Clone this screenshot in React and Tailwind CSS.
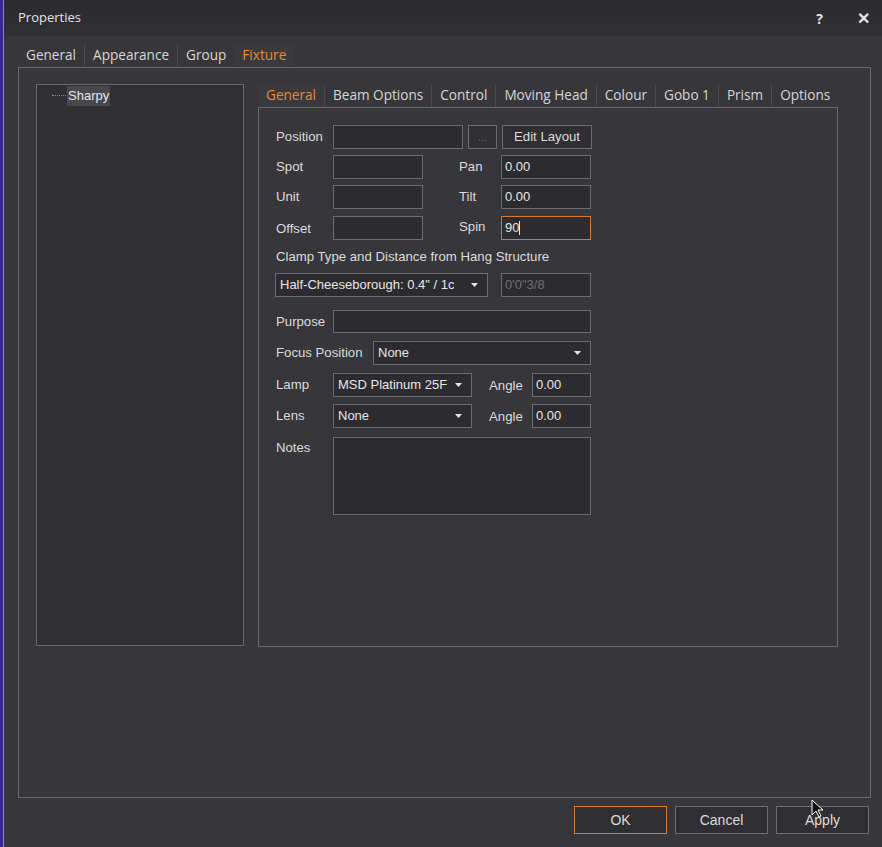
import React from 'react';

// Fixture properties dialog, dark theme
const sans = { fontFamily: '"Open Sans", "Noto Sans", sans-serif' };
const ui = { fontFamily: '"Liberation Sans", Arial, sans-serif' };

function Tab({ label, active, last }) {
  return (
    <div
      className={`h-full flex items-center px-[8px] ${last ? '' : 'border-r border-[#4a494e]'} ${
        active ? 'text-[#e8892f] bg-[#3a393e]' : 'text-[#d6d6d6]'
      }`}
    >
      {label}
    </div>
  );
}

function Input({ w, value, focus, disabled, h = 24, children }) {
  return (
    <div
      className={`flex items-center px-[3px] text-[13px] bg-[#2c2b2f] border ${
        focus ? 'border-[#d8782a]' : 'border-[#6c6c70]'
      } ${disabled ? 'text-[#6f6f73]' : 'text-[#e6e6e6]'}`}
      style={{ width: w, height: h }}
    >
      {value}
      {children}
    </div>
  );
}

function Select({ w, value }) {
  return (
    <div
      className="flex items-center justify-between pl-[4px] pr-[9px] h-[24px] text-[13px] text-[#e6e6e6] bg-[#2c2b2f] border border-[#6c6c70]"
      style={{ width: w }}
    >
      <span className="whitespace-nowrap overflow-hidden">{value}</span>
      <svg width="7" height="4" viewBox="0 0 7 4" className="shrink-0 ml-[4px]">
        <path d="M0 0h7L3.5 4z" fill="#e6e6e6" />
      </svg>
    </div>
  );
}

function Label({ w, children, className = '' }) {
  return (
    <div className={`text-[13.2px] text-[#dcdcdc] shrink-0 ${className}`} style={{ width: w }}>
      {children}
    </div>
  );
}

function Button({ children, primary, w = 93, h = 28 }) {
  return (
    <div
      className={`flex items-center justify-center text-[14px] text-[#dcdcdc] bg-[#2f2e32] border ${
        primary ? 'border-[#d8782a]' : 'border-[#6c6c70]'
      }`}
      style={{ width: w, height: h }}
    >
      {children}
    </div>
  );
}

export default function App() {
  const outerTabs = ['General', 'Appearance', 'Group', 'Fixture'];
  const innerTabs = ['General', 'Beam Options', 'Control', 'Moving Head', 'Colour', 'Gobo 1', 'Prism', 'Options'];

  return (
    <div className="w-[882px] h-[847px] flex bg-[#37363a] overflow-hidden relative" style={sans}>
      {/* app edge behind the dialog */}
      <div className="w-[4px] shrink-0 bg-[#3a2596] border-r border-[#d9782c]" />

      <div className="flex-1 flex flex-col">
        {/* title bar */}
        <div className="h-[36px] shrink-0 flex items-center pl-[14px] pr-[12px] bg-gradient-to-b from-[#2b2a2e] to-[#302f33] text-[13px] text-[#e4e4e4]">
          <span>Properties</span>
          <div className="ml-auto flex items-center gap-[34px] font-bold text-[14px]">
            <span>?</span>
            <span className="text-[16px]">✕</span>
          </div>
        </div>

        {/* outer tabs */}
        <div className="mt-[8px] ml-[14px] h-[23px] flex text-[13.6px]">
          {outerTabs.map((t, i) => (
            <Tab key={t} label={t} active={t === 'Fixture'} last={i >= outerTabs.length - 2} />
          ))}
        </div>

        {/* outer panel */}
        <div className="ml-[14px] w-[853px] h-[731px] border border-[#6a6a6e] flex pl-[17px] pt-[16px]">
          {/* tree */}
          <div className="w-[208px] h-[562px] border border-[#6a6a6e] bg-[#302f33] pt-[1px] pl-[15px]">
            <div className="flex items-center">
              <div className="w-[14px] border-t border-dotted border-[#8a8a8a] mr-[1px]" />
              <span className="px-[1px] bg-[#48474c] text-[13px] text-[#e6e6e6]" style={ui}>
                Sharpy
              </span>
            </div>
          </div>

          {/* fixture pages */}
          <div className="ml-[14px] flex flex-col">
            <div className="h-[23px] flex text-[13.6px]">
              {innerTabs.map((t, i) => (
                <Tab key={t} label={t} active={t === 'General'} last={i === innerTabs.length - 1} />
              ))}
            </div>
            <div className="w-[580px] h-[540px] border border-[#6a6a6e] pl-[17px] pt-[17px]" style={ui}>
              {/* Position */}
              <div className="flex items-center">
                <Label w={57}>Position</Label>
                <Input w={130} />
                <div className="ml-[5px] w-[29px] h-[24px] border border-[#6c6c70] bg-[#302f33] flex items-center justify-center text-[#6f6f73] text-[11px]">
                  ...
                </div>
                <div className="ml-[5px]">
                  <Button w={90} h={24}>
                    <span className="text-[13.2px]">Edit Layout</span>
                  </Button>
                </div>
              </div>

              {/* Spot / Pan */}
              <div className="flex items-center mt-[6px]">
                <Label w={57}>Spot</Label>
                <Input w={90} />
                <Label w={42} className="ml-[36px]">Pan</Label>
                <Input w={90} value="0.00" />
              </div>
              <div className="flex items-center mt-[6px]">
                <Label w={57}>Unit</Label>
                <Input w={90} />
                <Label w={42} className="ml-[36px]">Tilt</Label>
                <Input w={90} value="0.00" />
              </div>
              <div className="flex items-center mt-[7px]">
                <Label w={57} className="mt-[2px]">Offset</Label>
                <Input w={90} />
                <Label w={42} className="ml-[36px] -mt-[2px]">Spin</Label>
                <Input w={90} value="90" focus>
                  <span className="w-px h-[14px] bg-[#e6e6e6]" />
                </Input>
              </div>

              {/* Clamp */}
              <div className="mt-[7px] h-[20px] leading-[20px] text-[13.2px] text-[#dcdcdc]">
                Clamp Type and Distance from Hang Structure
              </div>
              <div className="flex items-center mt-[6px] -ml-[1px]">
                <Select w={213} value={'Half-Cheeseborough: 0.4" / 1c'} />
                <div className="ml-[13px]">
                  <Input w={90} value={'0\'0"3/8'} disabled />
                </div>
              </div>

              <div className="flex items-center mt-[13px]">
                <Label w={57}>Purpose</Label>
                <Input w={258} h={23} />
              </div>
              <div className="flex items-center mt-[8px]">
                <Label w={97}>Focus Position</Label>
                <Select w={218} value="None" />
              </div>
              <div className="flex items-center mt-[8px]">
                <Label w={57}>Lamp</Label>
                <Select w={139} value="MSD Platinum 25F" />
                <Label w={43} className="ml-[17px] mt-[2px]">Angle</Label>
                <Input w={59} value="0.00" />
              </div>
              <div className="flex items-center mt-[7px]">
                <Label w={57}>Lens</Label>
                <Select w={139} value="None" />
                <Label w={43} className="ml-[17px] mt-[2px]">Angle</Label>
                <Input w={59} value="0.00" />
              </div>
              <div className="flex items-start mt-[9px]">
                <Label w={57} className="pt-[1px]">Notes</Label>
                <Input w={258} h={78} />
              </div>
            </div>
          </div>
        </div>

        {/* footer buttons */}
        <div className="mt-[8px] mr-[13px] flex justify-end gap-[8px]" style={ui}>
          <Button primary>OK</Button>
          <Button>Cancel</Button>
          <Button>Apply</Button>
        </div>
      </div>

      {/* mouse pointer */}
      <svg className="absolute left-[811px] top-[799px]" width="13" height="20" viewBox="0 0 13 20">
        <path d="M1 1v15l4-4 3 6 2-1-3-6h5z" fill="#111" stroke="#fff" strokeWidth="1" />
      </svg>
    </div>
  );
}
